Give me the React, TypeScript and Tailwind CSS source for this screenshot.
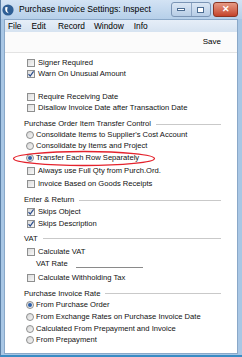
import React from 'react';

const Check = ({ checked = false }: { checked?: boolean }) => (
  <span className="relative w-[8px] h-[8px] shrink-0 border border-[#8e8f8f] bg-gradient-to-br from-[#dcdcdc] to-[#f8f8f8]">
    {checked && (
      <svg viewBox="0 0 8 8" className="absolute left-[-1px] top-[-1px] w-[8px] h-[8px]">
        <path d="M1.5 4.2 L3.2 6 L6.6 1.4" fill="none" stroke="#2a4c8c" strokeWidth="1.2" />
      </svg>
    )}
  </span>
);

const Radio = ({ on = false }: { on?: boolean }) => (
  <span className="flex items-center justify-center w-[8px] h-[8px] shrink-0 rounded-full border border-[#8e8f8f] bg-gradient-to-br from-[#d6d6d6] to-[#f6f6f6]">
    {on && <span className="w-[4px] h-[4px] rounded-full bg-[#2d5fa8]" />}
  </span>
);

const CheckRow = ({ label, checked, mt }: { label: string; checked?: boolean; mt: string }) => (
  <div className={`flex items-center h-[11px] pl-[22px] gap-[3px] ${mt}`}>
    <Check checked={checked} />
    <span>{label}</span>
  </div>
);

const RadioRow = ({ label, on, mt }: { label: string; on?: boolean; mt: string }) => (
  <div className={`flex items-center h-[11px] pl-[21px] gap-[2px] ${mt}`}>
    <Radio on={on} />
    <span>{label}</span>
  </div>
);

const Header = ({ label, mt, h }: { label: string; mt: string; h: string }) => (
  <div className={`flex items-center pl-[19px] pr-[16px] gap-[5px] ${h} ${mt}`}>
    <span className="whitespace-nowrap">{label}</span>
    <span className="flex-1 h-[2px] border-t border-[#c9c9c9] border-b border-b-white mt-[1px]" />
  </div>
);

export default function App() {
  return (
    <div className="w-[242px] h-[357px] flex flex-col bg-[#a9c7e5] border-l border-[#5b7fa6] border-b-2 border-b-[#3a8cc4] overflow-hidden" style={{ fontFamily: '"Liberation Sans", Arial, sans-serif' }}>
      {/* title bar */}
      <div className="flex items-center h-[19px] shrink-0 bg-gradient-to-b from-[#d3e3f4] to-[#b6cfe9] relative">
        <svg viewBox="0 0 12 12" className="ml-[1px] w-[12px] h-[12px] shrink-0">
          <circle cx="6" cy="6" r="5.6" fill="#2f5f95" />
          <path d="M3.5 3 C2.5 6 4 9 7 9.2 C5 8 4.6 5.5 5.8 3.2 Z" fill="#fff" />
        </svg>
        <span className="ml-[5px] text-[8.6px] text-black whitespace-nowrap">Purchase Invoice Settings: Inspect</span>
        <div className="absolute right-[4px] top-[2px] flex h-[15px]">
          <div className="flex w-[40px] shrink-0 rounded-[3px] border border-[#7b95b5] bg-gradient-to-b from-[#dbe7f4] to-[#b7cde6]">
            <div className="flex-1 flex items-center justify-center border-r border-[#8ea6c4]">
              <span className="w-[8px] h-[3px] bg-white border border-[#4d6d92]" />
            </div>
            <div className="flex-1 flex items-center justify-center">
              <span className="w-[7px] h-[6px] border-[1.5px] border-[#4d6d92] bg-white" />
            </div>
          </div>
          <div className="ml-[2px] w-[25px] shrink-0 flex items-center justify-center rounded-[3px] border border-[#8a3422] bg-gradient-to-b from-[#e59a85] to-[#c4422a]">
            <span className="text-white text-[9px] font-bold leading-none">✕</span>
          </div>
        </div>
      </div>
      {/* client */}
      <div className="flex-1 flex flex-col mr-[4px] ml-[3px] mb-[1px] bg-white border border-[#8aa8c8] text-black">
        <div className="flex items-center h-[12px] bg-gradient-to-b from-[#e6eef8] to-[#d6e3f1] text-[8.4px] pl-[2px]">
          <span className="ml-[1px]">File</span>
          <span className="ml-[10px]">Edit</span>
          <span className="ml-[12px]">Record</span>
          <span className="ml-[9px]">Window</span>
          <span className="ml-[10px]">Info</span>
        </div>
        <div className="flex items-center justify-end h-[21px] pr-[16px] text-[8px] border-b border-[#e3e3e3] bg-[#fbfbfb]">Save</div>
        <div className="relative flex flex-col pt-[4px] text-[7.6px] leading-none text-[#111]">
          <CheckRow label="Signer Required" mt="mt-0" />
          <CheckRow label="Warn On Unusual Amount" checked mt="mt-0" />
          <CheckRow label="Require Receiving Date" mt="mt-[12px]" />
          <CheckRow label="Disallow Invoice Date after Transaction Date" mt="mt-0" />
          <Header label="Purchase Order Item Transfer Control" mt="mt-[6px]" h="h-[10px]" />
          <RadioRow label="Consolidate Items to Supplier's Cost Account" mt="mt-0" />
          <RadioRow label="Consolidate by Items and Project" mt="mt-0" />
          <RadioRow label="Transfer Each Row Separately" on mt="mt-[1px]" />
          <CheckRow label="Always use Full Qty from Purch.Ord." mt="mt-[2px]" />
          <CheckRow label="Invoice Based on Goods Receipts" mt="mt-[2px]" />
          <Header label="Enter & Return" mt="mt-[6px]" h="h-[10px]" />
          <CheckRow label="Skips Object" checked mt="mt-[1px]" />
          <CheckRow label="Skips Description" checked mt="mt-[1px]" />
          <Header label="VAT" mt="mt-[4px]" h="h-[11px]" />
          <CheckRow label="Calculate VAT" mt="mt-[2px]" />
          <div className="flex items-center h-[11px] pl-[31px] mt-[1px]">
            <span>VAT Rate</span>
            <span className="ml-[8px] w-[67px] h-[8px] border-b border-[#8a8a8a] mt-[1px]" />
          </div>
          <CheckRow label="Calculate Withholding Tax" mt="mt-[3px]" />
          <Header label="Purchase Invoice Rate" mt="mt-[5px]" h="h-[11px]" />
          <RadioRow label="From Purchase Order" on mt="mt-0" />
          <RadioRow label="From Exchange Rates on Purchase Invoice Date" mt="mt-[1px]" />
          <RadioRow label="Calculated From Prepayment and Invoice" mt="mt-[1px]" />
          <RadioRow label="From Prepayment" mt="mt-0" />
          {/* annotation */}
          <svg className="absolute left-[7px] top-[97px] w-[144px] h-[17px]" viewBox="0 0 144 17">
            <ellipse cx="72" cy="8.5" rx="70.5" ry="7" fill="none" stroke="#e4222c" strokeWidth="1.3" />
          </svg>
        </div>
      </div>
    </div>
  );
}
